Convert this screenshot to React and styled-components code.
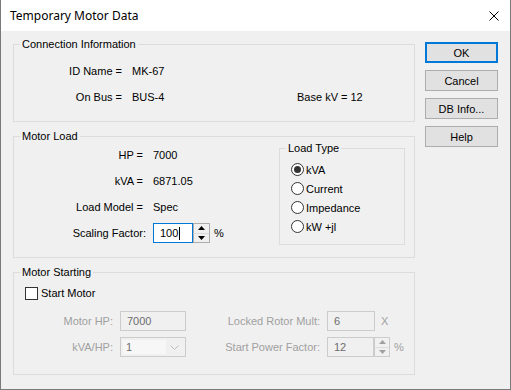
import React from "react";
import styled, { createGlobalStyle } from "styled-components";

const Global = createGlobalStyle`
  html, body { margin: 0; padding: 0; background: #f0f0f0; }
  body { font-family: "Liberation Sans", Arial, sans-serif; font-size: 11px; color: #000; }
  * { box-sizing: border-box; }
`;

const Window = styled.div`
  width: 511px;
  height: 390px;
  display: flex;
  flex-direction: column;
  background: #f0f0f0;
  border-left: 1px solid #7a7a7a;
  border-right: 1px solid #7a7a7a;
  border-bottom: 1px solid #7a7a7a;
`;

const TitleBar = styled.div`
  height: 31px;
  flex: none;
  background: #fff;
  display: flex;
  align-items: center;
  justify-content: space-between;
  padding: 0 11px 0 9px;
`;

const Title = styled.span`
  font-family: "Noto Sans", "Segoe UI", sans-serif;
  font-size: 12px;
  color: #000;
  margin-top: -1px;
`;

const Body = styled.div`
  flex: 1;
  display: flex;
  padding: 7px 0 0 12px;
`;

const LeftCol = styled.div`
  width: 402px;
  display: flex;
  flex-direction: column;
  gap: 8px;
`;

const Group = styled.fieldset`
  margin: ${(p) => p.$m || "0"};
  padding: ${(p) => p.$pad || "0"};
  border: 1px solid #dcdcdc;
  height: ${(p) => p.$h}px;
  width: ${(p) => (p.$w ? `${p.$w}px` : "auto")};
  min-width: 0;
  display: block;
`;

const Legend = styled.legend`
  margin-left: 6px;
  padding: 0 2px;
  font-size: 11px;
  line-height: 13px;
  color: #000;
`;

const Rows = styled.div`
  display: flex;
  flex-direction: column;
  gap: ${(p) => p.$gap}px;
  padding-top: ${(p) => p.$pt ?? 0}px;
`;

const Row = styled.div`
  display: flex;
  align-items: center;
  height: 20px;
`;

const Label = styled.span`
  width: ${(p) => p.$w}px;
  flex: none;
  text-align: right;
  white-space: nowrap;
  color: ${(p) => (p.$disabled ? "#a0a0a0" : "#000")};
`;

const Value = styled.span`
  margin-left: ${(p) => p.$ml ?? 10}px;
  width: ${(p) => (p.$w ? `${p.$w}px` : "auto")};
  flex: none;
  white-space: nowrap;
  color: ${(p) => (p.$disabled ? "#a0a0a0" : "#000")};
`;

const Load = styled.div`
  display: flex;
  justify-content: space-between;
  align-items: flex-start;
  padding-right: 9px;
`;

const TextBox = styled.div`
  margin-left: ${(p) => p.$ml ?? 0}px;
  width: ${(p) => p.$w}px;
  height: 20px;
  flex: none;
  display: flex;
  align-items: center;
  padding-left: ${(p) => p.$pl ?? 6}px;
  border: 1px solid ${(p) => (p.$focus ? "#0078d7" : "#cccccc")};
  background: ${(p) => (p.$disabled ? "#f0f0f0" : "#fff")};
  color: ${(p) => (p.$disabled ? "#6d6d6d" : "#000")};
`;

const Caret = styled.span`
  width: 1px;
  height: 13px;
  background: #000;
  margin-left: 1px;
`;

const Spin = styled.div`
  width: ${(p) => p.$w}px;
  height: 20px;
  flex: none;
  display: flex;
  flex-direction: column;
  border: 1px solid ${(p) => (p.$disabled ? "#cccccc" : "#adadad")};
  border-left: none;
  background: #f0f0f0;
`;

const SpinHalf = styled.div`
  flex: 1;
  display: flex;
  align-items: center;
  justify-content: center;
  border-left: 1px solid ${(p) => (p.$disabled ? "#cccccc" : "#adadad")};
  & + & { border-top: 1px solid ${(p) => (p.$disabled ? "#dcdcdc" : "#d4d4d4")}; }
`;

const Tri = ({ down, color }) => (
  <svg width="7" height="4" viewBox="0 0 7 4">
    <path d={down ? "M0 0H7L3.5 4Z" : "M3.5 0L7 4H0Z"} fill={color} />
  </svg>
);

const Unit = styled.span`
  margin-left: ${(p) => p.$ml ?? 4}px;
  color: ${(p) => (p.$disabled ? "#a0a0a0" : "#000")};
`;

const RadioList = styled.div`
  display: flex;
  flex-direction: column;
  padding: 5px 0 0 11px;
`;

const RadioRow = styled.label`
  display: flex;
  align-items: center;
  height: 19px;
  gap: 2px;
`;

const RadioCircle = styled.span`
  width: 13px;
  height: 13px;
  border-radius: 50%;
  border: 1px solid #333;
  background: #fff;
  display: flex;
  align-items: center;
  justify-content: center;
  &::after {
    content: "";
    display: ${(p) => (p.$on ? "block" : "none")};
    width: 7px;
    height: 7px;
    border-radius: 50%;
    background: #333;
  }
`;

const CheckRow = styled.div`
  display: flex;
  align-items: center;
  height: 16px;
  gap: 3px;
  margin: 6px 0 10px 11px;
`;

const CheckBox = styled.span`
  width: 13px;
  height: 13px;
  border: 1px solid #333;
  background: #fff;
`;

const Combo = styled.div`
  margin-left: 7px;
  width: 66px;
  height: 20px;
  flex: none;
  display: flex;
  align-items: center;
  border: 1px solid #cccccc;
  background: #f0f0f0;
  padding: 2px;
`;

const ComboText = styled.div`
  width: 43px;
  height: 100%;
  background: #f7f7f7;
  color: #6d6d6d;
  display: flex;
  align-items: center;
  padding-left: 3px;
`;

const ComboArrow = styled.div`
  flex: 1;
  display: flex;
  justify-content: center;
  align-items: center;
`;

const Buttons = styled.div`
  margin-left: 10px;
  padding-top: 4px;
  display: flex;
  flex-direction: column;
  gap: 7px;
`;

const Button = styled.button`
  width: 73px;
  height: 21px;
  padding: 0;
  font-family: "Liberation Sans", Arial, sans-serif;
  font-size: 11px;
  color: #000;
  background: #e1e1e1;
  border: ${(p) => (p.$default ? "2px solid #0078d7" : "1px solid #adadad")};
`;

const CloseIcon = () => (
  <svg width="10" height="10" viewBox="0 0 10 10">
    <path d="M0.5 0.5L9.5 9.5M9.5 0.5L0.5 9.5" stroke="#000" strokeWidth="1" />
  </svg>
);

export default function App() {
  return (
    <>
      <Global />
      <Window>
        <TitleBar>
          <Title>Temporary Motor Data</Title>
          <CloseIcon />
        </TitleBar>
        <Body>
          <LeftCol>
            <Group $h={84} $pad="10px 0 0 0">
              <Legend>Connection Information</Legend>
              <Rows $gap={6}>
                <Row>
                  <Label $w={108}>ID Name =</Label>
                  <Value>MK-67</Value>
                </Row>
                <Row>
                  <Label $w={108}>On Bus =</Label>
                  <Value $w={165}>BUS-4</Value>
                  <Value $ml={0}>Base kV = 12</Value>
                </Row>
              </Rows>
            </Group>

            <Group $h={128}>
              <Legend>Motor Load</Legend>
              <Load>
                <Rows $gap={6} $pt={2}>
                  <Row>
                    <Label $w={129}>HP =</Label>
                    <Value>7000</Value>
                  </Row>
                  <Row>
                    <Label $w={129}>kVA =</Label>
                    <Value>6871.05</Value>
                  </Row>
                  <Row>
                    <Label $w={129}>Load Model =</Label>
                    <Value>Spec</Value>
                  </Row>
                  <Row>
                    <Label $w={132}>Scaling Factor:</Label>
                    <TextBox $ml={7} $w={40} $focus>
                      100<Caret />
                    </TextBox>
                    <Spin $w={17}>
                      <SpinHalf><Tri color="#000" /></SpinHalf>
                      <SpinHalf><Tri down color="#000" /></SpinHalf>
                    </Spin>
                    <Unit>%</Unit>
                  </Row>
                </Rows>
                <Group $w={126} $h={103} $m="-1px 0 0 0">
                  <Legend>Load Type</Legend>
                  <RadioList>
                    <RadioRow><RadioCircle $on />kVA</RadioRow>
                    <RadioRow><RadioCircle />Current</RadioRow>
                    <RadioRow><RadioCircle />Impedance</RadioRow>
                    <RadioRow><RadioCircle />kW +jl</RadioRow>
                  </RadioList>
                </Group>
              </Load>
            </Group>

            <Group $h={109}>
              <Legend>Motor Starting</Legend>
              <CheckRow>
                <CheckBox />
                <span>Start Motor</span>
              </CheckRow>
              <Rows $gap={6}>
                <Row>
                  <Label $w={99} $disabled>Motor HP:</Label>
                  <TextBox $ml={7} $w={66} $disabled>7000</TextBox>
                  <Label $w={134} $disabled>Locked Rotor Mult:</Label>
                  <TextBox $ml={7} $w={48} $disabled>6</TextBox>
                  <Unit $ml={6} $disabled>X</Unit>
                </Row>
                <Row>
                  <Label $w={99} $disabled>kVA/HP:</Label>
                  <Combo>
                    <ComboText>1</ComboText>
                    <ComboArrow>
                      <svg width="9" height="5" viewBox="0 0 9 5">
                        <path d="M0.5 0.5L4.5 4.5L8.5 0.5" stroke="#bcbcbc" fill="none" />
                      </svg>
                    </ComboArrow>
                  </Combo>
                  <Label $w={134} $disabled>Start Power Factor:</Label>
                  <TextBox $ml={7} $w={47} $disabled>12</TextBox>
                  <Spin $w={16} $disabled>
                    <SpinHalf $disabled><Tri color="#a0a0a0" /></SpinHalf>
                    <SpinHalf $disabled><Tri down color="#a0a0a0" /></SpinHalf>
                  </Spin>
                  <Unit $disabled>%</Unit>
                </Row>
              </Rows>
            </Group>
          </LeftCol>
          <Buttons>
            <Button $default>OK</Button>
            <Button>Cancel</Button>
            <Button>DB Info...</Button>
            <Button>Help</Button>
          </Buttons>
        </Body>
      </Window>
    </>
  );
}
